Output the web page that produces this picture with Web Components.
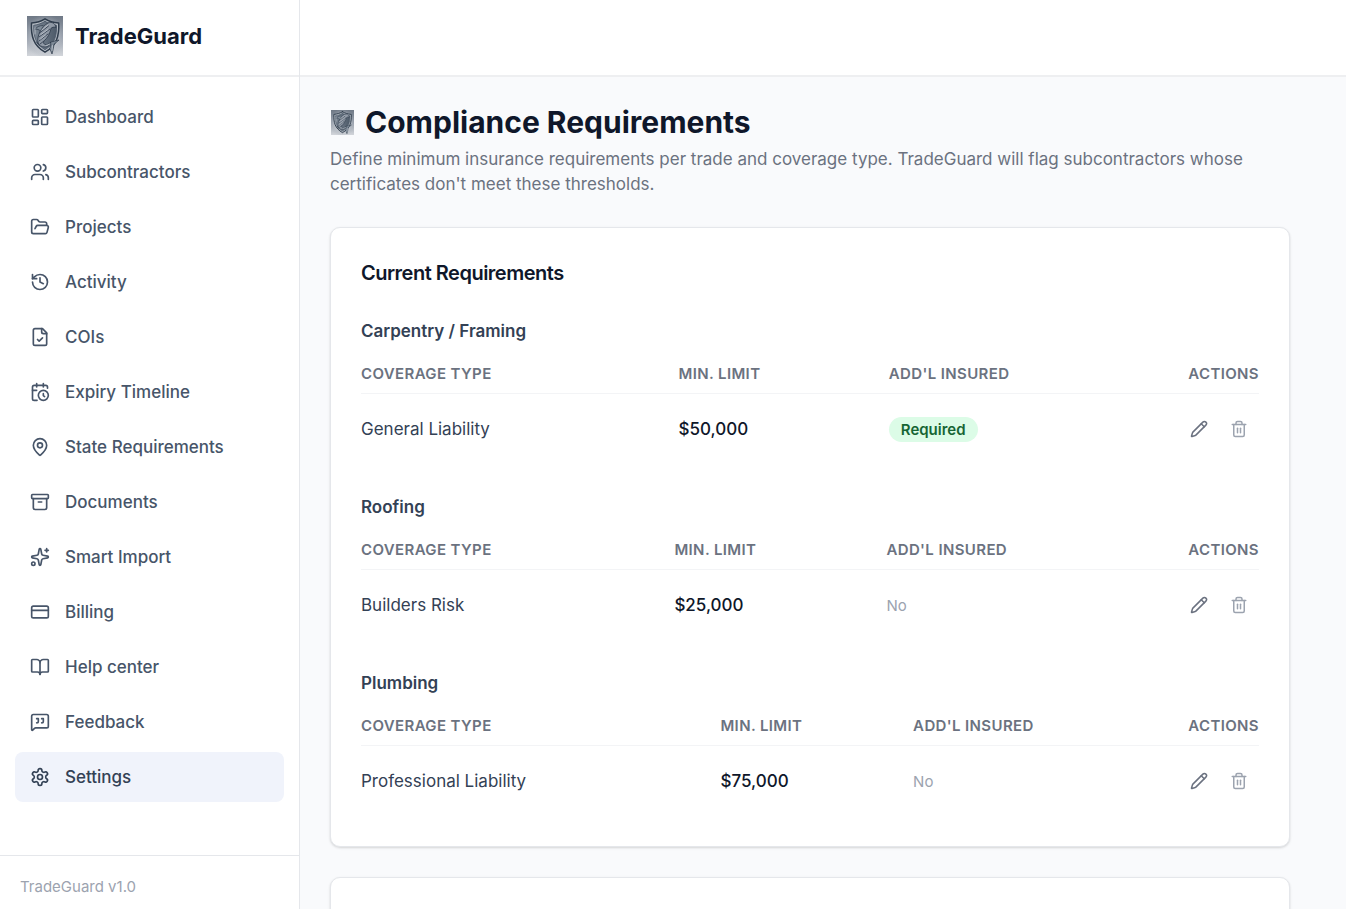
<!DOCTYPE html>
<html lang="en">
<head>
<meta charset="utf-8">
<meta name="viewport" content="width=device-width, initial-scale=1">
<title>TradeGuard</title>
<style>
  body {
    margin: 0;
    font-family: Inter, "Liberation Sans", sans-serif;
    font-size: 17px;
    line-height: 25px;
    color: #0f172a;
    background: #fff;
  }
</style>
</head>
<body>
<tg-shell>
  <tg-sidebar slot="sidebar">
    <tg-nav-item icon="dashboard">Dashboard</tg-nav-item>
    <tg-nav-item icon="users">Subcontractors</tg-nav-item>
    <tg-nav-item icon="folder">Projects</tg-nav-item>
    <tg-nav-item icon="history">Activity</tg-nav-item>
    <tg-nav-item icon="file">COIs</tg-nav-item>
    <tg-nav-item icon="calendar">Expiry Timeline</tg-nav-item>
    <tg-nav-item icon="pin">State Requirements</tg-nav-item>
    <tg-nav-item icon="archive">Documents</tg-nav-item>
    <tg-nav-item icon="sparkles">Smart Import</tg-nav-item>
    <tg-nav-item icon="card">Billing</tg-nav-item>
    <tg-nav-item icon="book">Help center</tg-nav-item>
    <tg-nav-item icon="quote">Feedback</tg-nav-item>
    <tg-nav-item icon="settings" active>Settings</tg-nav-item>
    <span slot="footer">TradeGuard v1.0</span>
  </tg-sidebar>

  <tg-page-header heading="Compliance Requirements">
    Define minimum insurance requirements per trade and coverage type. TradeGuard will flag subcontractors whose certificates don't meet these thresholds.
  </tg-page-header>

  <tg-card heading="Current Requirements">
    <tg-trade name="Carpentry / Framing" coverage="General Liability" limit="$50,000" insured></tg-trade>
    <tg-trade name="Roofing" coverage="Builders Risk" limit="$25,000"></tg-trade>
    <tg-trade name="Plumbing" coverage="Professional Liability" limit="$75,000"></tg-trade>
  </tg-card>

  <tg-card></tg-card>
</tg-shell>

<script>
const ICONS = {
  dashboard: '<rect width="7" height="9" x="3" y="3" rx="1"/><rect width="7" height="5" x="14" y="3" rx="1"/><rect width="7" height="9" x="14" y="12" rx="1"/><rect width="7" height="5" x="3" y="16" rx="1"/>',
  users: '<path d="M16 21v-2a4 4 0 0 0-4-4H6a4 4 0 0 0-4 4v2"/><circle cx="9" cy="7" r="4"/><path d="M22 21v-2a4 4 0 0 0-3-3.87"/><path d="M16 3.13a4 4 0 0 1 0 7.75"/>',
  folder: '<path d="m6 14 1.5-2.9A2 2 0 0 1 9.24 10H20a2 2 0 0 1 1.94 2.5l-1.54 6a2 2 0 0 1-1.95 1.5H4a2 2 0 0 1-2-2V5a2 2 0 0 1 2-2h3.9a2 2 0 0 1 1.69.9l.81 1.2a2 2 0 0 0 1.67.9H18a2 2 0 0 1 2 2v2"/>',
  history: '<path d="M3 12a9 9 0 1 0 9-9 9.75 9.75 0 0 0-6.74 2.74L3 8"/><path d="M3 3v5h5"/><path d="M12 7v5l4 2"/>',
  file: '<path d="M15 2H6a2 2 0 0 0-2 2v16a2 2 0 0 0 2 2h12a2 2 0 0 0 2-2V7Z"/><path d="M14 2v4a2 2 0 0 0 2 2h4"/><path d="m9 15 2 2 4-4"/>',
  calendar: '<path d="M21 7.5V6a2 2 0 0 0-2-2H5a2 2 0 0 0-2 2v14a2 2 0 0 0 2 2h3.5"/><path d="M16 2v4"/><path d="M8 2v4"/><path d="M3 10h5"/><path d="M17.5 17.5 16 16.3V14"/><circle cx="16" cy="16" r="6"/>',
  pin: '<path d="M20 10c0 4.993-5.539 10.193-7.399 11.799a1 1 0 0 1-1.202 0C9.539 20.193 4 14.993 4 10a8 8 0 0 1 16 0"/><circle cx="12" cy="10" r="3"/>',
  archive: '<rect width="20" height="5" x="2" y="3" rx="1"/><path d="M4 8v11a2 2 0 0 0 2 2h12a2 2 0 0 0 2-2V8"/><path d="M10 12h4"/>',
  sparkles: '<path d="M11.017 2.814a1 1 0 0 1 1.966 0l1.051 5.558a2 2 0 0 0 1.594 1.594l5.558 1.051a1 1 0 0 1 0 1.966l-5.558 1.051a2 2 0 0 0-1.594 1.594l-1.051 5.558a1 1 0 0 1-1.966 0l-1.051-5.558a2 2 0 0 0-1.594-1.594l-5.558-1.051a1 1 0 0 1 0-1.966l5.558-1.051a2 2 0 0 0 1.594-1.594z"/><path d="M20 2v4"/><path d="M22 4h-4"/><circle cx="4" cy="20" r="2"/>',
  card: '<rect width="20" height="14" x="2" y="5" rx="2"/><path d="M2 10h20"/>',
  book: '<path d="M12 7v14"/><path d="M3 18a1 1 0 0 1-1-1V4a1 1 0 0 1 1-1h5a4 4 0 0 1 4 4 4 4 0 0 1 4-4h5a1 1 0 0 1 1 1v13a1 1 0 0 1-1 1h-6a3 3 0 0 0-3 3 3 3 0 0 0-3-3z"/>',
  quote: '<path d="M22 17a2 2 0 0 1-2 2H6.828a2 2 0 0 0-1.414.586l-2.202 2.202A.71.71 0 0 1 2 21.286V5a2 2 0 0 1 2-2h16a2 2 0 0 1 2 2z"/><path d="M14 13a2 2 0 0 0 2-2V8h-2"/><path d="M8 13a2 2 0 0 0 2-2V8H8"/>',
  settings: '<path d="M12.22 2h-.44a2 2 0 0 0-2 2v.18a2 2 0 0 1-1 1.73l-.43.25a2 2 0 0 1-2 0l-.15-.08a2 2 0 0 0-2.73.73l-.22.38a2 2 0 0 0 .73 2.73l.15.1a2 2 0 0 1 1 1.72v.51a2 2 0 0 1-1 1.74l-.15.09a2 2 0 0 0-.73 2.73l.22.38a2 2 0 0 0 2.73.73l.15-.08a2 2 0 0 1 2 0l.43.25a2 2 0 0 1 1 1.73V20a2 2 0 0 0 2 2h.44a2 2 0 0 0 2-2v-.18a2 2 0 0 1 1-1.73l.43-.25a2 2 0 0 1 2 0l.15.08a2 2 0 0 0 2.73-.73l.22-.39a2 2 0 0 0-.73-2.73l-.15-.08a2 2 0 0 1-1-1.74v-.5a2 2 0 0 1 1-1.74l.15-.09a2 2 0 0 0 .73-2.73l-.22-.38a2 2 0 0 0-2.73-.73l-.15.08a2 2 0 0 1-2 0l-.43-.25a2 2 0 0 1-1-1.73V4a2 2 0 0 0-2-2z"/><circle cx="12" cy="12" r="3"/>',
  pencil: '<path d="M21.174 6.812a1 1 0 0 0-3.986-3.987L3.842 16.174a2 2 0 0 0-.5.83l-1.321 4.352a.5.5 0 0 0 .623.622l4.353-1.32a2 2 0 0 0 .83-.497z"/><path d="m15 5 4 4"/>',
  trash: '<path d="M3 6h18"/><path d="M19 6v14a2 2 0 0 1-2 2H7a2 2 0 0 1-2-2V6"/><path d="M8 6V4a2 2 0 0 1 2-2h4a2 2 0 0 1 2 2v2"/><path d="M10 11v6"/><path d="M14 11v6"/>'
};

class TgIcon extends HTMLElement {
  connectedCallback() {
    if (this.shadowRoot) return;
    this.attachShadow({ mode: "open" }).innerHTML = `
      <style>
        :host { display: block; flex: none; width: 20px; height: 20px; }
        svg { display: block; width: 100%; height: 100%; }
      </style>
      <svg viewBox="0 0 24 24" fill="none" stroke="currentColor" stroke-width="2" stroke-linecap="round" stroke-linejoin="round" aria-hidden="true">${ICONS[this.getAttribute("name")]}</svg>
    `;
  }
}

// Engraved steel shield with a fish leaping across it, tail over the rim
class TgLogo extends HTMLElement {
  connectedCallback() {
    if (this.shadowRoot) return;
    this.attachShadow({ mode: "open" }).innerHTML = `
      <style>
        :host { display: block; flex: none; width: 36px; height: 40px; }
        svg { display: block; width: 100%; height: 100%; }
      </style>
      <svg viewBox="0 0 36 40" preserveAspectRatio="none" fill="none" stroke-linecap="round" stroke-linejoin="round" aria-hidden="true">
        <defs>
          <linearGradient id="bg" x1="0" y1="0" x2="0" y2="1">
            <stop offset="0" stop-color="#6f7986"/>
            <stop offset=".5" stop-color="#979fab"/>
            <stop offset="1" stop-color="#d3d6db"/>
          </linearGradient>
          <radialGradient id="glow" cx=".5" cy=".5" r=".55">
            <stop offset=".5" stop-color="#d5d9de" stop-opacity=".7"/>
            <stop offset="1" stop-color="#9ca4af" stop-opacity="0"/>
          </radialGradient>
          <linearGradient id="face" x1="0" y1="0" x2="1" y2="0">
            <stop offset="0" stop-color="#7c8794"/>
            <stop offset="1" stop-color="#4d5a69"/>
          </linearGradient>
        </defs>
        <path fill="url(#bg)" d="M0 0h36v40H0z"/>
        <path fill="url(#glow)" d="M0 0h36v40H0z"/>
        <path fill="#b4bbc3" stroke="#2f3c4c" stroke-width="1.5" d="M18 2.800C14.500 5 9.500 6.600 4.500 7c-.6 12.500 1.500 22.300 13.500 29.200C30 29.300 32.300 19.500 31.700 7 26.500 6.600 21.500 5 18 2.800Z"/>
        <path fill="url(#face)" stroke="#465364" stroke-width=".8" d="M18 5.300C15 7.200 11 8.800 6.700 9.300c-.3 10.700 1.500 18.500 11.300 24.400 9.800-5.900 11.900-13.700 11.500-24.400C25.300 8.800 21 7.200 18 5.300Z"/>
        <path fill="#9099a5" stroke="#2c3949" stroke-width=".8" d="M11 27c-1.500-7 3-16 10-20 4-1.500 7 0 8 4.500-2-.8-4-.3-5 1C23 16 22 20 18 24c-2 1.500-2 3.500 0 4.500 2 .6 4-.5 6-2.500-.5 3-3 5-6 5-3.500 0-6-1.500-7-4Z"/>
        <path fill="#7f8b98" stroke="#2c3949" stroke-width=".7" d="M16 9.500c-4 0-6.500 1.500-8 4 2.500-.5 4 0 5 1.200M24 26l8-2-5 4.300-.6 4-1.400 5.700-2.200-5.500 1-3.200Z"/>
        <path stroke="#344152" stroke-width=".9" d="m12.500 17 9-7M12 21l11-8M12 25l9-7M13 28l4-3M9.500 26l3 4"/>
        <path stroke="#c8ced5" stroke-width=".7" d="m15 14 6-5M14 18.500l7-5M13.500 23l5-4M8 12v6M19 29.500l4-1.500M25.500 29.500l-.5 5"/>
      </svg>
    `;
  }
}

class TgNavItem extends HTMLElement {
  connectedCallback() {
    if (this.shadowRoot) return;
    this.attachShadow({ mode: "open" }).innerHTML = `
      <style>
        :host { display: block; color: #475569; }
        :host([active]) { color: #334155; }
        a {
          display: flex;
          align-items: center;
          gap: 15px;
          padding: 12px 15px;
          border-radius: 8px;
          line-height: 26px;
          font-weight: 500;
          color: inherit;
          text-decoration: none;
        }
        :host([active]) a { background: #f0f3fb; }
      </style>
      <a href="#"${this.hasAttribute("active") ? ' aria-current="page"' : ""}><tg-icon name="${this.getAttribute("icon")}"></tg-icon><slot></slot></a>
    `;
  }
}

class TgSidebar extends HTMLElement {
  connectedCallback() {
    if (this.shadowRoot) return;
    this.attachShadow({ mode: "open" }).innerHTML = `
      <style>
        :host {
          display: flex;
          flex-direction: column;
          box-sizing: border-box;
          width: 300px;
          height: 100%;
          background: #fff;
          border-right: 1px solid #e5e7eb;
        }
        header {
          display: flex;
          align-items: center;
          gap: 12px;
          box-sizing: border-box;
          height: 77px;
          padding: 0 27px 3px;
          border-bottom: 2px solid #eeeff1;
          font-size: 22px;
          font-weight: 700;
        }
        nav {
          flex: 1;
          display: flex;
          flex-direction: column;
          gap: 5px;
          padding: 15px;
        }
        footer {
          padding: 18px 20px 10px;
          border-top: 1px solid #e5e7eb;
          font-size: 15px;
          color: #9ca3af;
        }
      </style>
      <header><tg-logo></tg-logo><span>TradeGuard</span></header>
      <nav aria-label="Main"><slot></slot></nav>
      <footer><slot name="footer"></slot></footer>
    `;
  }
}

class TgShell extends HTMLElement {
  connectedCallback() {
    if (this.shadowRoot) return;
    this.attachShadow({ mode: "open" }).innerHTML = `
      <style>
        :host { display: flex; height: 100vh; margin-right: 3px; overflow: hidden; background: #f9fafc; }
        .body { flex: 1; min-width: 0; display: flex; flex-direction: column; }
        .topbar {
          flex: none;
          box-sizing: border-box;
          height: 77px;
          background: #fff;
          border-bottom: 2px solid #eeeff1;
        }
        main {
          flex: 1;
          min-height: 0;
          overflow: hidden;
          display: flex;
          flex-direction: column;
          gap: 30px;
          max-width: 960px;
          padding: 30px;
        }
      </style>
      <slot name="sidebar"></slot>
      <div class="body">
        <div class="topbar"></div>
        <main><slot></slot></main>
      </div>
    `;
  }
}

class TgPageHeader extends HTMLElement {
  connectedCallback() {
    if (this.shadowRoot) return;
    this.attachShadow({ mode: "open" }).innerHTML = `
      <style>
        :host { display: block; }
        h1 {
          display: flex;
          align-items: center;
          gap: 10px;
          margin: 0;
          font-size: 30px;
          line-height: 30px;
          font-weight: 700;
        }
        tg-logo { width: 23px; height: 25px; padding: 0 1px; }
        p { margin: 10px 0 0; color: #6b7280; }
      </style>
      <h1><tg-logo></tg-logo><span>${this.getAttribute("heading")}</span></h1>
      <p><slot></slot></p>
    `;
  }
}

class TgCard extends HTMLElement {
  connectedCallback() {
    if (this.shadowRoot) return;
    const heading = this.getAttribute("heading");
    this.attachShadow({ mode: "open" }).innerHTML = `
      <style>
        :host {
          display: block;
          flex: none;
          min-height: 40px;
          padding: 30px;
          background: #fff;
          border: 1px solid #e5e7eb;
          border-radius: 10px;
          box-shadow: 0 1px 3px rgba(0, 0, 0, .1), 0 1px 2px rgba(0, 0, 0, .06);
        }
        h2 {
          margin: 0 0 30px;
          font-size: 20px;
          line-height: 30px;
          font-weight: 600;
          letter-spacing: -0.025em;
        }
        .list { display: flex; flex-direction: column; gap: 30px; }
      </style>
      ${heading ? `<h2>${heading}</h2>` : ""}
      <div class="list"><slot></slot></div>
    `;
  }
}

class TgTrade extends HTMLElement {
  connectedCallback() {
    if (this.shadowRoot) return;
    const insured = this.hasAttribute("insured")
      ? '<span class="badge">Required</span>'
      : '<span class="no">No</span>';
    this.attachShadow({ mode: "open" }).innerHTML = `
      <style>
        :host { display: block; }
        h3 {
          margin: 0 0 10px;
          font-size: 17px;
          line-height: 26px;
          font-weight: 600;
          color: #334155;
        }
        table { width: 100%; border-collapse: collapse; }
        th {
          padding: 10px 20px 9px 0;
          border-bottom: 1px solid #f3f4f6;
          font-size: 15px;
          line-height: 20px;
          font-weight: 600;
          letter-spacing: 0.025em;
          text-align: left;
          text-transform: uppercase;
          color: #6b7280;
        }
        td { padding: 15px 20px 15px 0; color: #334155; }
        td:first-child { padding-right: 25px; }
        th:last-child, td:last-child { width: 80px; padding-right: 0; text-align: right; }
        .limit { font-weight: 500; color: #0f172a; }
        .badge {
          display: inline-block;
          padding: 0 12px;
          border-radius: 13px;
          background: #dcfce7;
          color: #166534;
          font-size: 15px;
          font-weight: 600;
        }
        .no { font-size: 15px; color: #9ca3af; }
        .actions { display: flex; justify-content: flex-end; }
        button {
          padding: 11px;
          border: 0;
          background: none;
          color: #6b7280;
          cursor: pointer;
        }
        button:last-child { color: #9ca3af; }
        tg-icon { width: 18px; height: 18px; }
      </style>
      <h3 id="name">${this.getAttribute("name")}</h3>
      <table aria-labelledby="name">
        <thead>
          <tr><th>Coverage Type</th><th>Min. Limit</th><th>Add'l Insured</th><th>Actions</th></tr>
        </thead>
        <tbody>
          <tr>
            <td>${this.getAttribute("coverage")}</td>
            <td class="limit">${this.getAttribute("limit")}</td>
            <td>${insured}</td>
            <td>
              <div class="actions">
                <button type="button" aria-label="Edit"><tg-icon name="pencil"></tg-icon></button>
                <button type="button" aria-label="Delete"><tg-icon name="trash"></tg-icon></button>
              </div>
            </td>
          </tr>
        </tbody>
      </table>
    `;
  }
}

customElements.define("tg-icon", TgIcon);
customElements.define("tg-logo", TgLogo);
customElements.define("tg-nav-item", TgNavItem);
customElements.define("tg-sidebar", TgSidebar);
customElements.define("tg-shell", TgShell);
customElements.define("tg-page-header", TgPageHeader);
customElements.define("tg-card", TgCard);
customElements.define("tg-trade", TgTrade);
</script>
</body>
</html>
